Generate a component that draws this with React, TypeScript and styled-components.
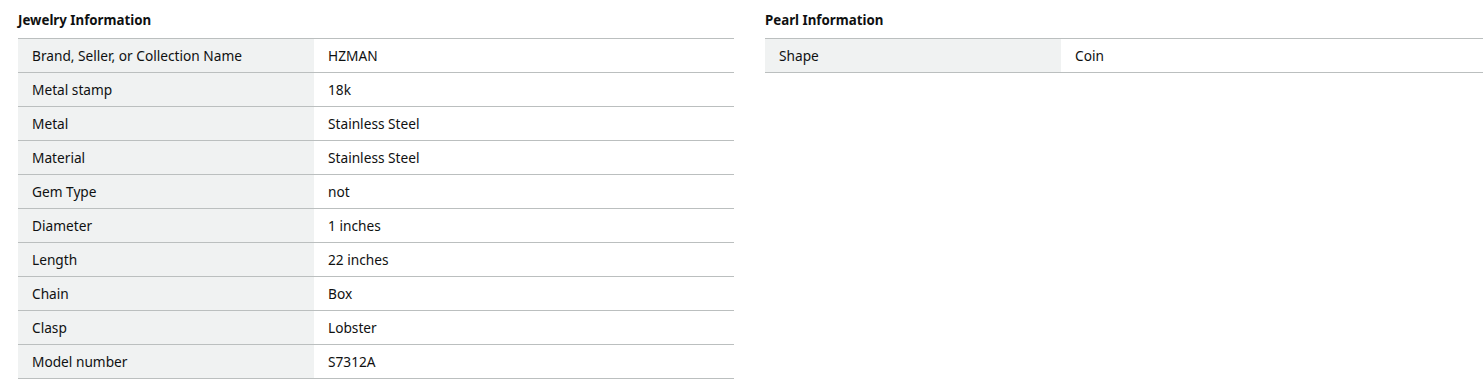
import React from "react";
import styled, { createGlobalStyle } from "styled-components";

const Global = createGlobalStyle`
  html, body { margin: 0; padding: 0; background: #fff; }
  body { font-family: "Noto Sans", "Open Sans", Arial, sans-serif; color: #0f1111; }
`;

const Page = styled.div`
  display: grid;
  grid-template-columns: 716px 718px;
  column-gap: 31px;
  padding: 10px 0 0 18px;
  width: 1500px;
`;

const Section = styled.section`
  display: flex;
  flex-direction: column;
`;

const Heading = styled.h2`
  margin: 0 0 9px 0;
  padding-top: 1px;
  font-size: 13.3px;
  line-height: 18px;
  font-weight: 700;
  color: #0f1111;
`;

const Table = styled.div`
  display: flex;
  flex-direction: column;
  border-bottom: 1px solid #bbbfbf;
`;

const Row = styled.div`
  display: grid;
  grid-template-columns: 296px 1fr;
  border-top: 1px solid #bbbfbf;
`;

const Cell = styled.div<{ $label?: boolean }>`
  padding: 7px 14px 6px 14px;
  font-size: 13.7px;
  line-height: 20px;
  background: ${(p) => (p.$label ? "#f0f2f2" : "#fff")};
  color: #0f1111;
`;

const jewelry: [string, string][] = [
  ["Brand, Seller, or Collection Name", "HZMAN"],
  ["Metal stamp", "18k"],
  ["Metal", "Stainless Steel"],
  ["Material", "Stainless Steel"],
  ["Gem Type", "not"],
  ["Diameter", "1 inches"],
  ["Length", "22 inches"],
  ["Chain", "Box"],
  ["Clasp", "Lobster"],
  ["Model number", "S7312A"],
];

const pearl: [string, string][] = [["Shape", "Coin"]];

function InfoTable({ title, rows }: { title: string; rows: [string, string][] }) {
  return (
    <Section>
      <Heading>{title}</Heading>
      <Table>
        {rows.map(([k, v]) => (
          <Row key={k}>
            <Cell $label>{k}</Cell>
            <Cell>{v}</Cell>
          </Row>
        ))}
      </Table>
    </Section>
  );
}

export default function App() {
  return (
    <>
      <Global />
      <Page>
        <InfoTable title="Jewelry Information" rows={jewelry} />
        <InfoTable title="Pearl Information" rows={pearl} />
      </Page>
    </>
  );
}
